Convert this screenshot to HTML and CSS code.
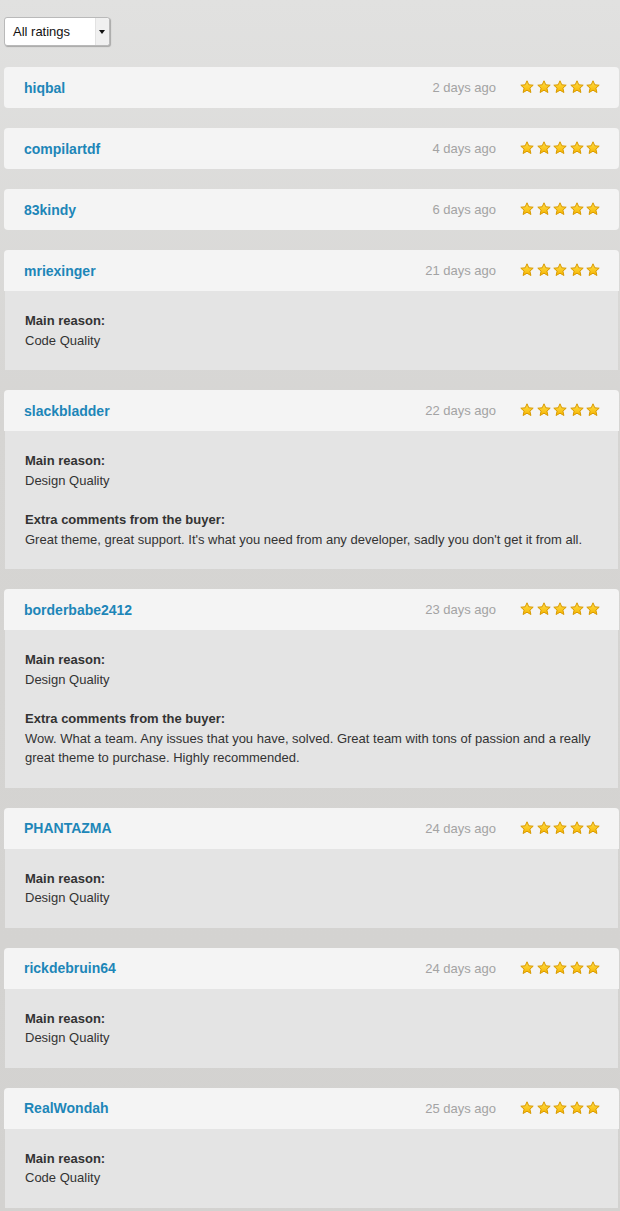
FILE: index.html
```html
<!DOCTYPE html>
<html lang="en">
<head>
<meta charset="utf-8">
<title>Ratings</title>
<link rel="stylesheet" href="styles.css">
</head>
<body>
<svg class="defs" width="0" height="0" aria-hidden="true">
  <defs>
    <linearGradient id="sg" x1="0" y1="0" x2="0" y2="1">
      <stop offset="0" stop-color="#ffdf4a"/>
      <stop offset="1" stop-color="#f7b500"/>
    </linearGradient>
    <symbol id="star" viewBox="0 0 14 14">
      <path d="M7 0.8 L8.8 4.8 L13.2 5.2 L9.9 8.1 L10.9 12.5 L7 10.2 L3.1 12.5 L4.1 8.1 L0.8 5.2 L5.2 4.8 Z" fill="url(#sg)" stroke="#d99a00" stroke-width="1" stroke-linejoin="round"/>
    </symbol>
  </defs>
</svg>
<div class="page">
  <div class="select">
    <span class="select-label">All ratings</span>
    <span class="select-arrow"></span>
  </div>

  <div class="list">
    <div class="review">
      <div class="review-head">
        <a class="name">hiqbal</a>
        <span class="date">2 days ago</span>
        <span class="stars"><svg><use href="#star"/></svg><svg><use href="#star"/></svg><svg><use href="#star"/></svg><svg><use href="#star"/></svg><svg><use href="#star"/></svg></span>
      </div>
    </div>

    <div class="review">
      <div class="review-head">
        <a class="name">compilartdf</a>
        <span class="date">4 days ago</span>
        <span class="stars"><svg><use href="#star"/></svg><svg><use href="#star"/></svg><svg><use href="#star"/></svg><svg><use href="#star"/></svg><svg><use href="#star"/></svg></span>
      </div>
    </div>

    <div class="review">
      <div class="review-head">
        <a class="name">83kindy</a>
        <span class="date">6 days ago</span>
        <span class="stars"><svg><use href="#star"/></svg><svg><use href="#star"/></svg><svg><use href="#star"/></svg><svg><use href="#star"/></svg><svg><use href="#star"/></svg></span>
      </div>
    </div>

    <div class="review">
      <div class="review-head">
        <a class="name">mriexinger</a>
        <span class="date">21 days ago</span>
        <span class="stars"><svg><use href="#star"/></svg><svg><use href="#star"/></svg><svg><use href="#star"/></svg><svg><use href="#star"/></svg><svg><use href="#star"/></svg></span>
      </div>
      <div class="review-body">
        <p><b>Main reason:</b><br>Code Quality</p>
      </div>
    </div>

    <div class="review">
      <div class="review-head">
        <a class="name">slackbladder</a>
        <span class="date">22 days ago</span>
        <span class="stars"><svg><use href="#star"/></svg><svg><use href="#star"/></svg><svg><use href="#star"/></svg><svg><use href="#star"/></svg><svg><use href="#star"/></svg></span>
      </div>
      <div class="review-body">
        <p><b>Main reason:</b><br>Design Quality</p>
        <p><b>Extra comments from the buyer:</b><br>Great theme, great support. It's what you need from any developer, sadly you don't get it from all.</p>
      </div>
    </div>

    <div class="review">
      <div class="review-head">
        <a class="name">borderbabe2412</a>
        <span class="date">23 days ago</span>
        <span class="stars"><svg><use href="#star"/></svg><svg><use href="#star"/></svg><svg><use href="#star"/></svg><svg><use href="#star"/></svg><svg><use href="#star"/></svg></span>
      </div>
      <div class="review-body">
        <p><b>Main reason:</b><br>Design Quality</p>
        <p><b>Extra comments from the buyer:</b><br>Wow. What a team. Any issues that you have, solved. Great team with tons of passion and a really great theme to purchase. Highly recommended.</p>
      </div>
    </div>

    <div class="review">
      <div class="review-head">
        <a class="name">PHANTAZMA</a>
        <span class="date">24 days ago</span>
        <span class="stars"><svg><use href="#star"/></svg><svg><use href="#star"/></svg><svg><use href="#star"/></svg><svg><use href="#star"/></svg><svg><use href="#star"/></svg></span>
      </div>
      <div class="review-body">
        <p><b>Main reason:</b><br>Design Quality</p>
      </div>
    </div>

    <div class="review">
      <div class="review-head">
        <a class="name">rickdebruin64</a>
        <span class="date">24 days ago</span>
        <span class="stars"><svg><use href="#star"/></svg><svg><use href="#star"/></svg><svg><use href="#star"/></svg><svg><use href="#star"/></svg><svg><use href="#star"/></svg></span>
      </div>
      <div class="review-body">
        <p><b>Main reason:</b><br>Design Quality</p>
      </div>
    </div>

    <div class="review">
      <div class="review-head">
        <a class="name">RealWondah</a>
        <span class="date">25 days ago</span>
        <span class="stars"><svg><use href="#star"/></svg><svg><use href="#star"/></svg><svg><use href="#star"/></svg><svg><use href="#star"/></svg><svg><use href="#star"/></svg></span>
      </div>
      <div class="review-body">
        <p><b>Main reason:</b><br>Code Quality</p>
      </div>
    </div>
  </div>
</div>
</body>
</html>
```

FILE: styles.css
```css
html, body {
  margin: 0;
  padding: 0;
}
body {
  background: linear-gradient(to bottom, #e1e1e0 0px, #d6d5d3 420px, #d3d2d0 1211px);
  font-family: "Liberation Sans", Arial, Helvetica, sans-serif;
  color: #333;
  min-height: 1211px;
}
.defs {
  position: absolute;
  width: 0;
  height: 0;
}
.page {
  padding: 17px 1px 0 4px;
}
.select {
  display: flex;
  align-items: stretch;
  width: 104px;
  height: 27px;
  background: #fff;
  border: 1px solid #b9b9b9;
  border-radius: 3px;
  box-shadow: 1px 1px 1px rgba(0,0,0,0.25);
  font-size: 13px;
  color: #111;
}
.select-label {
  flex: 1;
  display: flex;
  align-items: center;
  padding-left: 8px;
}
.select-arrow {
  width: 13px;
  background: #f0f0f0;
  border-left: 1px solid #e2e2e2;
  border-radius: 0 3px 3px 0;
  display: flex;
  align-items: center;
  justify-content: center;
}
.select-arrow::after {
  content: "";
  border-left: 3px solid transparent;
  border-right: 3px solid transparent;
  border-top: 4px solid #111;
  margin-left: -1px;
}
.list {
  margin-top: 21px;
  display: flex;
  flex-direction: column;
  gap: 20px;
}
.review-head {
  display: flex;
  align-items: center;
  height: 41px;
  padding: 0 19px 0 20px;
  background: #f4f4f4;
  border-radius: 4px;
}
.review:has(.review-body) .review-head {
  border-radius: 4px 4px 0 0;
}
.name {
  font-size: 14px;
  font-weight: bold;
  color: #1d86b8;
  flex: 1;
}
.date {
  font-size: 13px;
  color: #a3a3a3;
  margin-right: 24px;
}
.stars {
  display: flex;
  gap: 2.5px;
  margin-top: -1px;
}
.stars svg {
  width: 14px;
  height: 14px;
  display: block;
}
.review-body {
  margin: 0 1px;
  background: #e4e4e4;
  padding: 20px 20px 20px 20px;
  font-size: 13px;
  line-height: 19.5px;
  color: #333;
}
.review-body p {
  margin: 0 0 20px 0;
}
.review-body p:last-child {
  margin-bottom: 0;
}
.review-body b {
  color: #333;
}
```
